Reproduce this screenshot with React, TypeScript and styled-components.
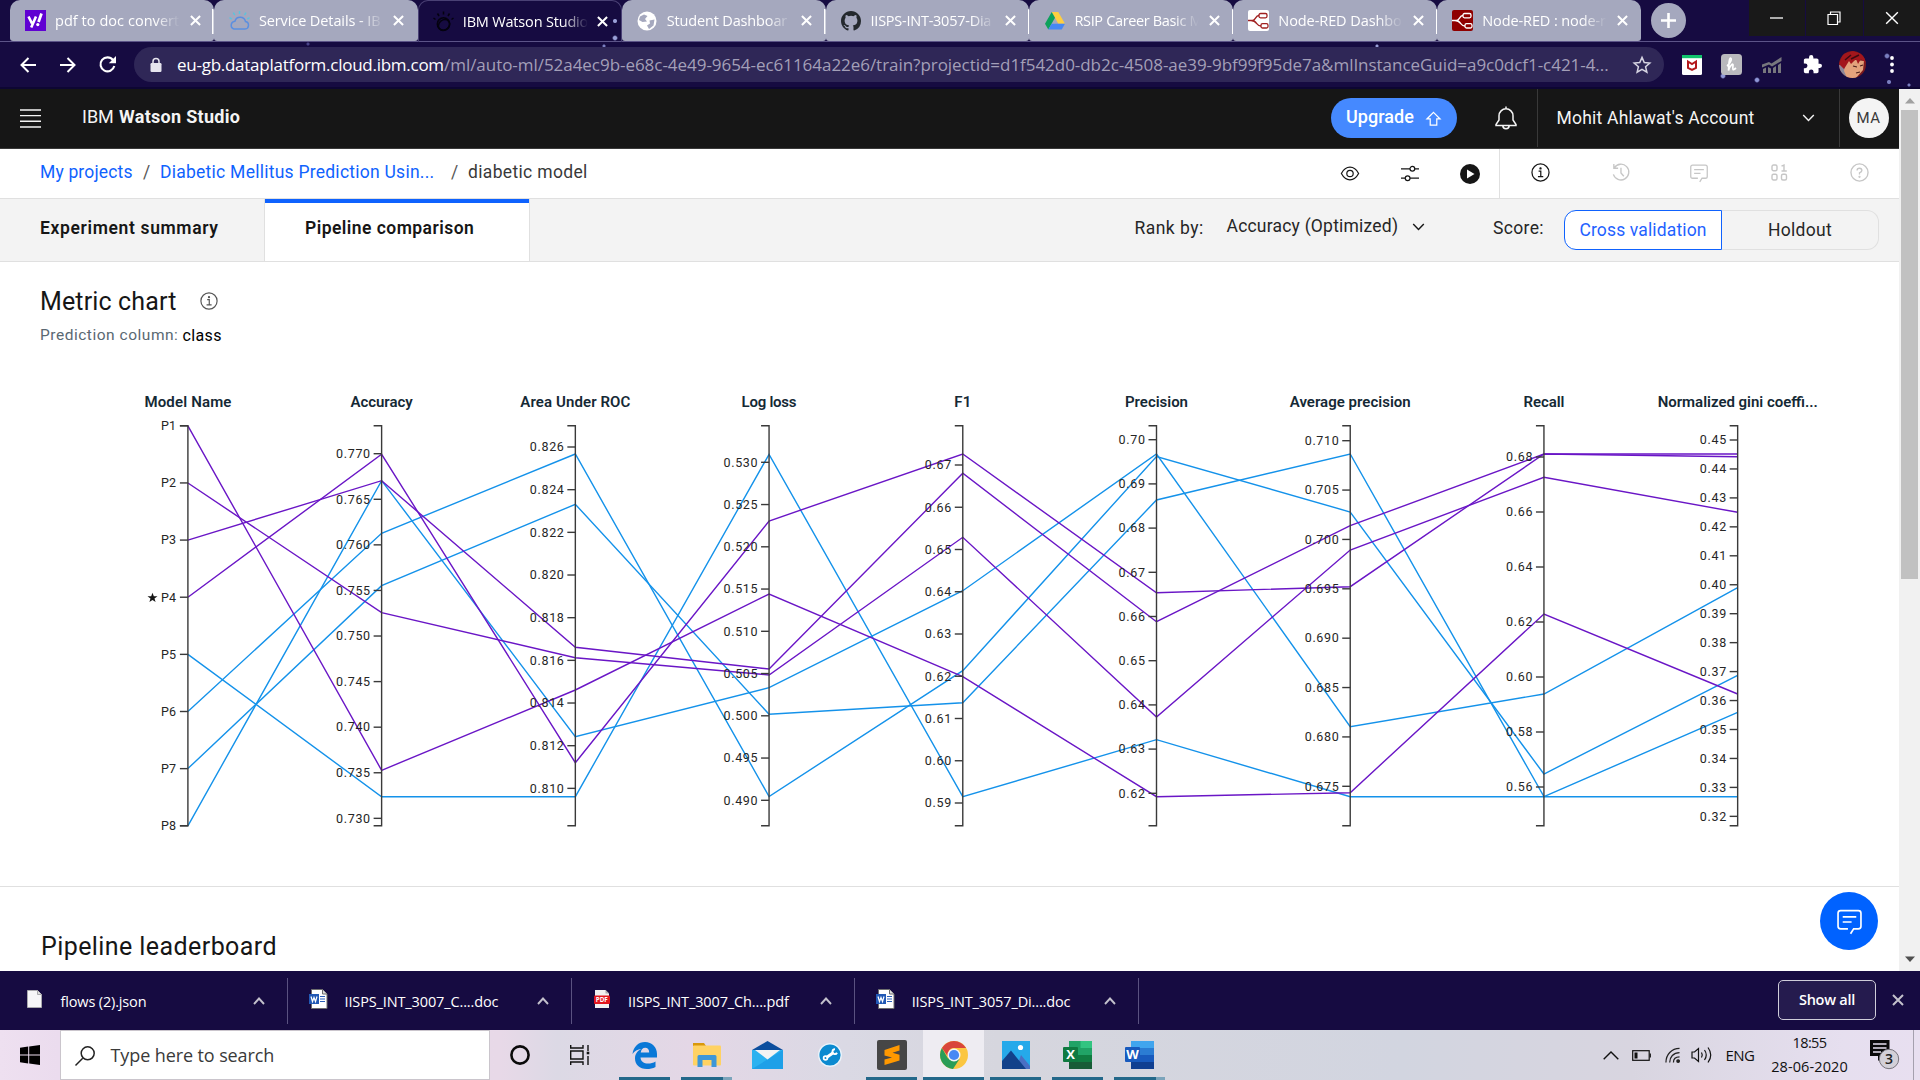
import React from "react";
import styled, { createGlobalStyle, css } from "styled-components";

const UI = '"Open Sans", "Noto Sans", sans-serif';
const PLEX = 'Roboto, "Open Sans", sans-serif';

const Global = createGlobalStyle`
  body { margin: 0; background: #fff; overflow: hidden; }
  * { box-sizing: border-box; }
  svg { display: block; flex: none; overflow: visible; }
`;

const Screen = styled.div`
  width: 1920px; height: 1080px; display: flex; flex-direction: column; overflow: hidden;
  font-family: ${PLEX}; color: #161616;
`;

const Label = styled.span<{ $w?: number; $size?: number; $ls?: number; $weight?: number; $color?: string; $ml?: number; $up?: number }>`
  flex: none; display: block; white-space: pre; line-height: 1.4;
  width: ${p => (p.$w ? p.$w + "px" : "auto")};
  font-size: ${p => p.$size ?? 17.5}px;
  letter-spacing: ${p => p.$ls ?? 0}px;
  font-weight: ${p => p.$weight ?? 400};
  color: ${p => p.$color ?? "inherit"};
  margin-left: ${p => p.$ml ?? 0}px;
  margin-bottom: ${p => p.$up ?? 0}px;
`;
const Slot = styled.span<{ $w: number; $ml?: number; $up?: number }>`
  flex: none; display: flex; justify-content: center; align-items: center;
  width: ${p => p.$w}px; margin-left: ${p => p.$ml ?? 0}px; margin-bottom: ${p => p.$up ?? 0}px;
`;

/* ---------- browser chrome ---------- */
const Chrome = styled.header`
  height: 89px; flex: none; font-family: ${UI}; color: #fff;
  background-color: #160b41;
  background-image:
    radial-gradient(circle at 615px 21px, #9aa0d8 1.5px, transparent 2.5px),
    radial-gradient(circle at 615px 38px, #9aa0d8 1.5px, transparent 3px),
    radial-gradient(circle at 604px 46px, #7a7fc0 1px, transparent 2px),
    radial-gradient(circle at 1723px 76px, #8f97d8 1.5px, transparent 3px),
    radial-gradient(circle at 1757px 80px, #8f97d8 1.5px, transparent 3px),
    radial-gradient(circle at 1887px 56px, #7a7fc0 1.5px, transparent 3px),
    radial-gradient(circle at 1889px 82px, #7a7fc0 1.5px, transparent 2.5px),
    radial-gradient(circle at 1909px 85px, #7a7fc0 1px, transparent 2px),
    radial-gradient(circle at 308px 44px, #4a448a 1px, transparent 2px),
    radial-gradient(circle at 1377px 46px, #9aa0d8 1px, transparent 2px);
  border-bottom: 2px solid #0d0632;
`;
const TabStrip = styled.div`
  height: 42px; display: flex; padding-left: 10px; border-bottom: 1px solid #5c5488;
`;
const TabBox = styled.div<{ $active?: boolean; $divider?: boolean }>`
  width: 203.9px; height: 41px; flex: none; display: flex; align-items: center; padding: 0 0 0 15px;
  border-radius: 10px 10px ${p => (p.$active ? "0 0" : "3px 3px")};
  background: ${p => (p.$active ? "transparent" : "#a5a8be")};
  ${p => p.$active && css`border: 1px solid #4a4175; border-bottom: 0; height: 42px; padding-left: 14px;`}
  ${p => p.$divider && css`
    background-image: linear-gradient(#fff, #fff);
    background-size: 1.5px 25px; background-repeat: no-repeat; background-position: right 9px;`}
`;
const TabTitle = styled.span<{ $ls: number }>`
  width: 125px; margin-left: 9px; font-size: 14.5px; letter-spacing: ${p => p.$ls}px; white-space: pre; overflow: hidden;
  mask-image: linear-gradient(90deg, #000 80%, transparent);
`;
const TabIcon = styled.span`
  width: 21px; height: 24px; flex: none; display: flex; align-items: center; justify-content: center;
`;
const TabClose = styled.span`
  margin-left: 9.5px; display: flex;
`;
const NewTab = styled.div`
  width: 35px; height: 35px; margin: 3px 0 0 10px; border-radius: 50%; background: #a5a8be; flex: none;
  display: flex; align-items: center; justify-content: center;
`;
const WindowButtons = styled.div`
  margin-left: auto; display: flex; gap: 1px; height: 36px;
`;
const WindowButton = styled.div`
  width: 56.5px; background: #191919; display: flex; align-items: center; justify-content: center;
`;
const Toolbar = styled.div`
  height: 45px; display: flex; align-items: center;
`;
const Address = styled.div`
  width: 1530px; height: 35px; margin-left: 18px; border-radius: 18px; background: #2f2757;
  display: flex; align-items: center; padding-left: 16px;
`;

/* ---------- page ---------- */
const Viewport = styled.div`
  height: 882px; flex: none; display: flex;
`;
const Page = styled.main`
  width: 1899px; display: flex; flex-direction: column; background: #fff;
`;
const Masthead = styled.div`
  height: 60px; flex: none; display: flex; align-items: center; background: #161616; color: #f4f4f4;
  border-bottom: 1px solid #393939; padding-bottom: 1px;
`;
const Rule = styled.span<{ $color: string; $ml?: number }>`
  width: 1px; align-self: stretch; flex: none; background: ${p => p.$color}; margin-left: ${p => p.$ml ?? 0}px;
`;
const Upgrade = styled.div`
  width: 126px; height: 40px; margin-left: 1091px; border-radius: 20px; background: #4589ff; color: #fff;
  display: flex; align-items: center; padding-left: 15px; flex: none;
`;
const Avatar = styled.div`
  width: 40px; height: 40px; border-radius: 50%; background: #f4f4f4; color: #393939; margin-left: 9px; flex: none;
  display: flex; align-items: center; justify-content: center; font-size: 15px; letter-spacing: .4px;
`;
const Crumbs = styled.nav`
  height: 50px; flex: none; display: flex; align-items: center; padding-left: 40px; border-bottom: 1px solid #e0e0e0;
`;
const Tabs = styled.div`
  height: 63px; flex: none; display: flex; align-items: center; background: #f3f3f3; border-bottom: 1px solid #e0e0e0;
`;
const PageTab = styled.div<{ $active?: boolean; $w: number }>`
  width: ${p => p.$w}px; height: 62px; flex: none; padding: 0 0 4px 40px; display: flex; align-items: center;
  ${p => p.$active && css`
    background: #fff; border: solid #e0e0e0; border-width: 0 1px; box-shadow: inset 0 4px #0f62fe;`}
`;
const Segmented = styled.div`
  display: flex; height: 40px; margin-left: 20px;
`;
const Segment = styled.div<{ $active?: boolean }>`
  width: ${p => (p.$active ? 158 : 157)}px; display: flex; align-items: center; justify-content: center;
  border: 1px solid ${p => (p.$active ? "#0f62fe" : "#e0e0e0")};
  border-radius: ${p => (p.$active ? "12px 0 0 12px" : "0 12px 12px 0")};
  background: ${p => (p.$active ? "#fff" : "transparent")};
  color: ${p => (p.$active ? "#1f62ff" : "#262626")};
  ${p => !p.$active && css`border-left: 0;`}
`;
const ChartSection = styled.section`
  height: 625px; flex: none; padding: 22px 0 0 40px; border-bottom: 1px solid #e0e0e0;
`;
const HeadingRow = styled.div`
  display: flex; align-items: center; height: 35px;
`;
const SubRow = styled.div`
  display: flex; align-items: center; height: 34px;
`;
const ChartBox = styled.div`
  margin: 30px 0 0 60px; height: 470px;
`;
const Leaderboard = styled.section`
  flex: 1; padding: 42px 0 0 41px; display: flex; justify-content: space-between;
`;
const ChatButton = styled.div`
  width: 58px; height: 58px; border-radius: 50%; background: #0062ff; margin: -37px 21px 0 0;
  display: flex; align-items: center; justify-content: center;
`;
const ScrollTrack = styled.div`
  width: 21px; background: #f1f1f1; display: flex; flex-direction: column; align-items: center; padding: 8px 0;
`;
const ScrollThumb = styled.div`
  width: 17px; height: 469px; background: #c1c1c1; margin: 6px 0 auto;
`;

/* ---------- downloads + taskbar ---------- */
const Downloads = styled.div`
  height: 59px; flex: none; background: #160b41; display: flex; align-items: center; color: #fff; font-family: ${UI};
`;
const Download = styled.div`
  width: 283.6px; height: 46px; display: flex; align-items: center; border-right: 1.5px solid #5a5280; flex: none;
  &:first-child { width: 288px; padding-left: 4px; }
`;
const ShowAll = styled.div`
  width: 98px; height: 40px; margin: 0 0 1px auto; border: 1px solid #cfcdd9; border-radius: 5px; background: #251b4e;
  display: flex; align-items: center; justify-content: center;
`;
const Taskbar = styled.footer`
  height: 50px; flex: none; display: flex; align-items: stretch; font-family: ${UI}; color: #111;
  background: linear-gradient(90deg, #eee0f0 0, #ebdcee 3%, #e8d9e8 26%, #dcd9e5 29%, #e4d7e6 36%, #dad9e4 44%, #d6d6de 52%, #d2d5e0 73%, #d8d5e0 85%, #e6dfef 96%, #e8dff0 100%);
`;
const StartCell = styled.div`
  width: 60px; display: flex; align-items: center; justify-content: center;
`;
const Search = styled.div`
  width: 430px; background: #fff; border: 1px solid #cac5cc; display: flex; align-items: center; padding: 1px 0 0 14px;
`;
const TaskItem = styled.div<{ $w: number; $ml: number; $run?: boolean; $active?: boolean; $more?: boolean }>`
  width: ${p => p.$w}px; margin-left: ${p => p.$ml}px; display: flex; align-items: center; justify-content: center; flex: none;
  background: ${p => (p.$active ? "#eeecf2" : "transparent")};
  border-bottom: 3px solid ${p => (p.$run ? "#23688a" : "transparent")};
  ${p => p.$more && css`border-image: linear-gradient(90deg, #23688a 82%, #7ba4bb 82%) 1;`}
  padding-top: 3px;
`;
const Clock = styled.div`
  width: 80px; margin-left: 14px; display: flex; flex-direction: column; align-items: center; justify-content: center; gap: 3px;
`;

const Stroke = ({ w, h, box, d, c = "currentColor", s = 1.5, children }: {
  w: number; h?: number; box: string; d?: string; c?: string; s?: number; children?: React.ReactNode;
}) => (
  <svg width={w} height={h ?? w} viewBox={box} fill="none" stroke={c} strokeWidth={s}>
    {d && <path d={d} />}
    {children}
  </svg>
);

const Cross = ({ size = 11, c = "#fff", s = 2.2 }: { size?: number; c?: string; s?: number }) => (
  <Stroke w={size} box="0 0 12 12" d="M1 1 11 11M11 1 1 11" c={c} s={s} />
);
const ChevronDown = ({ c, w = 12 }: { c: string; w?: number }) => (
  <Stroke w={w} h={8} box="0 0 12 8" d="M.7 1 6 6.6 11.3 1" c={c} s={1.4} />
);
const Info = ({ size, c }: { size: number; c: string }) => (
  <Stroke w={size} box="0 0 20 20" c={c} s={1.3}>
    <circle cx="10" cy="10" r="9" />
    <path d="M8 8.5h2.3V14M7.3 14.3h5.6" />
    <circle cx="10" cy="5.7" r=".6" fill={c} />
  </Stroke>
);
const Chat = ({ w, c, s }: { w: number; c: string; s: number }) => (
  <Stroke w={w} box="0 0 24 24" c={c} s={s} d="M10.5 19H3.5Q1 19 1 16.5V4Q1 1.5 3.5 1.5H20.5Q23 1.5 23 4V16.5Q23 19 20.5 19H16L13 23.8M5.5 7.5H18.5M5.5 12.5H14" />
);

const NodeRed = ({ bg, c }: { bg: string; c: string }) => (
  <svg width="21" height="21" viewBox="0 0 21 21">
    <rect width="21" height="21" rx="2" fill={bg} />
    <g fill="none" stroke={c} strokeWidth="1.3">
      <path d="M0 10.5h4.5C8 10.5 7 5.5 11 5.5M3 10.5C9.500 10.500 8 16 13 16" />
      <rect x="11" y="3.5" width="8" height="4.300" rx="1.500" />
      <rect x="13" y="13.700" width="7" height="4.300" rx="1.500" />
    </g>
  </svg>
);

const icons: Record<string, React.ReactNode> = {
  yahoo: (
    <svg width="21" height="21" viewBox="0 0 21 21">
      <rect width="21" height="21" fill="#6001d2" />
      <path d="M3.5 6.5 7 13.5M11 6.5 6.200 17.500" stroke="#fff" strokeWidth="2.6" />
      <path d="M13.500 12 16.500 3.500" stroke="#fff" strokeWidth="2.8" />
      <circle cx="12.800" cy="14.600" r="1.6" fill="#fff" />
    </svg>
  ),
  cloud: (
    <svg width="21" height="21" viewBox="0 0 21 21" fill="none" strokeWidth="1.5">
      <path d="M5 19h11a3.800 3.800 0 0 0 .5-7.500 5.500 5.500 0 0 0-10.600-.3A4 4 0 0 0 5 19z" stroke="#5b8fe0" />
      <path d="M10.500 4V1M5.800 5.200 4.300 2.700M15.500 5.200 17 2.700M2.800 9 .5 7.700M18.300 9l2.200-1.300" stroke="#5cc3dc" />
    </svg>
  ),
  watson: (
    <svg width="21" height="23" viewBox="0 0 21 23" fill="none" stroke="#04020f" strokeWidth="1.5">
      <circle cx="10.500" cy="14" r="6.200" />
      <ellipse cx="11" cy="15" rx="6" ry="5" transform="rotate(-40 11 15)" />
      <path d="M10.500 4.500V1.500M6 6 4.500 3.500M15 6l1.500-2.500M2.500 9.500.5 8M18.500 9.500l2-1.500" />
    </svg>
  ),
  globe: (
    <svg width="20" height="20" viewBox="0 0 20 20">
      <circle cx="10" cy="10" r="9.500" fill="#fff" />
      <path d="M3 5.500 7 3.500 10.500 5 8 8 10 10.500 5.500 11 2 9zM12.500 9.500l5-1-1 6-4.500 3.500-2-3.500 3-2z" fill="#a5a8be" />
    </svg>
  ),
  github: (
    <svg width="20" height="20" viewBox="0 0 16 16">
      <path fill="#24292e" d="M8 0C3.580 0 0 3.580 0 8c0 3.540 2.290 6.530 5.470 7.590.4.070.55-.17.55-.38 0-.19-.01-.82-.01-1.490-2.010.37-2.530-.49-2.690-.94-.09-.23-.48-.94-.82-1.130-.28-.15-.68-.52-.01-.53.63-.01 1.080.58 1.230.82.72 1.210 1.870.87 2.330.66.07-.52.28-.87.51-1.070-1.780-.2-3.640-.89-3.640-3.950 0-.87.31-1.590.82-2.150-.08-.2-.36-1.020.08-2.120 0 0 .67-.21 2.200.82a7.600 7.600 0 0 1 4 0c1.530-1.040 2.200-.82 2.200-.82.44 1.100.16 1.920.08 2.120.51.56.82 1.270.82 2.150 0 3.070-1.870 3.750-3.650 3.950.29.25.54.73.54 1.480 0 1.070-.01 1.930-.01 2.200 0 .21.15.46.55.38A8 8 0 0 0 16 8c0-4.420-3.580-8-8-8z" />
    </svg>
  ),
  drive: (
    <svg width="20" height="18" viewBox="0 0 20 18">
      <path d="M6.700 0h6.600L20 11.700h-6.700z" fill="#ffcf40" />
      <path d="M6.700 0 10 5.800 3.300 17.500 0 11.700z" fill="#0da15c" />
      <path d="M6.600 11.700H20l-3.300 5.800H3.300z" fill="#4688f4" />
    </svg>
  ),
  nodeWhite: <NodeRed bg="#fff" c="#a02020" />,
  nodeRed: <NodeRed bg="#8f0000" c="#fff" />,
};

const browserTabs = [
  { icon: "yahoo", title: "pdf to doc convert", ls: 0.05, divider: true },
  { icon: "cloud", title: "Service Details - IB", ls: -0.1 },
  { icon: "watson", title: "IBM Watson Studio", ls: -0.18, active: true },
  { icon: "globe", title: "Student Dashboar", ls: -0.15, divider: true },
  { icon: "github", title: "IISPS-INT-3057-Dia", ls: -0.25, divider: true },
  { icon: "drive", title: "RSIP Career Basic M", ls: -0.35, divider: true },
  { icon: "nodeWhite", title: "Node-RED Dashbo", ls: -0.08, divider: true },
  { icon: "nodeRed", title: "Node-RED : node-r", ls: -0.1 },
];

function BrowserChrome() {
  return (
    <Chrome>
      <TabStrip>
        {browserTabs.map(t => (
          <TabBox key={t.title} $active={t.active} $divider={t.divider}>
            <TabIcon>{icons[t.icon]}</TabIcon>
            <TabTitle $ls={t.ls}>{t.title}</TabTitle>
            <TabClose><Cross /></TabClose>
          </TabBox>
        ))}
        <NewTab><Stroke w={15} box="0 0 15 15" d="M7.5 0V15M0 7.5H15" c="#fff" s={2.6} /></NewTab>
        <WindowButtons>
          <WindowButton><Stroke w={13} h={2} box="0 0 13 2" d="M0 1H13" c="#fff" s={1.3} /></WindowButton>
          <WindowButton><Stroke w={14} box="0 0 14 14" d="M1 3.5H10.5V13.5H1zM3.5 3.5V1H13V11H10.5" c="#fff" s={1.2} /></WindowButton>
          <WindowButton><Cross size={14} s={1.2} /></WindowButton>
        </WindowButtons>
      </TabStrip>
      <Toolbar>
        <Slot $w={17} $ml={19}><Stroke w={16} box="0 0 16 16" d="M16 8H1.500M8.500 1 1.500 8 8.500 15" c="#fff" s={2} /></Slot>
        <Slot $w={17} $ml={23}><Stroke w={16} box="0 0 16 16" d="M0 8H14.500M7.500 1 14.500 8 7.500 15" c="#fff" s={2} /></Slot>
        <Slot $w={17} $ml={23}>
          <svg width="17" height="17" viewBox="0 0 17 17">
            <path d="M14 4A7 7 0 1 0 15.300 10" fill="none" stroke="#fff" strokeWidth="2.1" />
            <path d="M17 0V7.200H9.800z" fill="#fff" />
          </svg>
        </Slot>
        <Address>
          <svg width="12" height="14" viewBox="0 0 12 14">
            <rect x=".5" y="5" width="11" height="9" rx="1.2" fill="#e6e4ee" />
            <path d="M3 6V3.500a3 3 0 0 1 6 0V6" fill="none" stroke="#e6e4ee" strokeWidth="1.5" />
          </svg>
          <Label $size={17} $ls={-0.26} $w={267} $ml={15}>eu-gb.dataplatform.cloud.ibm.com</Label>
          <Label $size={17} $ls={-0.04} $w={1164} $color="#a39fb8">/ml/auto-ml/52a4ec9b-e68c-4e49-9654-ec61164a22e6/train?projectid=d1f542d0-db2c-4508-ae39-9bf99f95de7a&mlInstanceGuid=a9c0dcf1-c421-4...</Label>
          <Slot $w={18} $ml={25}><Stroke w={18} box="0 0 20 20" d="M10 1.500 12.500 7.200 18.700 7.800 14 12 15.400 18 10 14.800 4.600 18 6 12 1.300 7.800 7.500 7.200z" c="#d6d4e2" s={1.7} /></Slot>
        </Address>
        <Slot $w={21} $ml={17}>
          <svg width="20" height="20" viewBox="0 0 20 20">
            <rect width="20" height="20" rx="1.5" fill="#fff" /><rect width="20" height="3.2" fill="#10c46c" />
            <path d="M6 6.500 10 9 14 6.500V13L10 15 6 13z" fill="none" stroke="#b3191c" strokeWidth="2" />
          </svg>
        </Slot>
        <Slot $w={21} $ml={19}>
          <svg width="21" height="21" viewBox="0 0 21 21">
            <rect width="21" height="21" rx="3.5" fill="#b9b9bd" />
            <path d="M6 12C9 10 11.500 4.500 9.500 4 7.500 4 8 12 7.500 16.500 9 11 12.500 8.500 12 11.500 11.500 15.500 11.500 17 15 14" fill="none" stroke="#fff" strokeWidth="1.7" />
          </svg>
        </Slot>
        <Slot $w={20} $ml={20}>
          <svg width="20" height="16" viewBox="0 0 20 16">
            <path d="M0 7.500 7 5 9.500 6.500 19.500 0V4L10 9.500 7 7.500 0 10.500zM1 12l3-1.500V16H1zM6 10l3 1.500V16H6zM11 11l3-2v7h-3zM16 8l3-2v10h-3z" fill="#77777d" />
          </svg>
        </Slot>
        <Slot $w={20} $ml={20}>
          <svg width="19" height="19" viewBox="1 1 22 22">
            <path fill="#fff" d="M20.500 11H19V7c0-1.100-.9-2-2-2h-4V3.500a2.500 2.500 0 0 0-5 0V5H4c-1.100 0-2 .9-2 2v3.800h1.500a2.700 2.700 0 0 1 0 5.400H2V20c0 1.100.9 2 2 2h3.800v-1.500a2.700 2.700 0 0 1 5.400 0V22H17c1.100 0 2-.9 2-2v-4h1.500a2.500 2.500 0 0 0 0-5z" />
          </svg>
        </Slot>
        <Slot $w={28} $ml={16}>
          <svg width="27" height="27" viewBox="0 0 27 27">
            <clipPath id="face"><circle cx="13.500" cy="13.500" r="13.500" /></clipPath>
            <g clipPath="url(#face)">
              <rect width="27" height="27" fill="#7c1a1e" />
              <path d="M0 14 6 13 9 27H0z" fill="#8d8798" />
              <path d="M7 10 17 9 25 10 24 19 17 27H8L5 20z" fill="#e3a27c" />
              <path d="M0 13 4 3 14 0 25 4 27 12 22 8 19 13 17 8 12 13 10 10 5 18z" fill="#a3161c" />
              <path d="M6 9 12 4M12 8 20 4" stroke="#3c0a10" strokeWidth="1.5" />
              <path d="M14 15 18 16M21 15 24 14M17 22 21 21" stroke="#4a1e1a" strokeWidth="1.2" />
            </g>
          </svg>
        </Slot>
        <Slot $w={6} $ml={23}>
          <svg width="4" height="17" viewBox="0 0 4 17" fill="#fff"><circle cx="2" cy="2" r="1.9" /><circle cx="2" cy="8.500" r="1.9" /><circle cx="2" cy="15" r="1.9" /></svg>
        </Slot>
      </Toolbar>
    </Chrome>
  );
}

/* ---------- parallel coordinates chart ---------- */
type Axis = { title: string; from: number; step: number; digits: number; count: number; y0: number; dy: number; w: number };
const AXES: Axis[] = [
  { title: "Accuracy", from: 0.77, step: 0.005, digits: 3, count: 9, y0: 453.7, dy: 45.58, w: 62 },
  { title: "Area Under ROC", from: 0.826, step: 0.002, digits: 3, count: 9, y0: 447, dy: 42.67, w: 110 },
  { title: "Log loss", from: 0.53, step: 0.005, digits: 3, count: 9, y0: 462.3, dy: 42.25, w: 55 },
  { title: "F1", from: 0.67, step: 0.01, digits: 2, count: 9, y0: 465, dy: 42.25, w: 17 },
  { title: "Precision", from: 0.7, step: 0.01, digits: 2, count: 9, y0: 439.7, dy: 44.2, w: 63 },
  { title: "Average precision", from: 0.71, step: 0.005, digits: 3, count: 8, y0: 440.7, dy: 49.37, w: 121 },
  { title: "Recall", from: 0.68, step: 0.02, digits: 2, count: 7, y0: 457, dy: 55, w: 41 },
  { title: "Normalized gini coeffi...", from: 0.45, step: 0.01, digits: 2, count: 14, y0: 440, dy: 28.95, w: 160 },
];
const PURPLE = "#6a16c6";
const BLUE = "#1492ea";
const PIPELINES: { color: string; y: number[] }[] = [
  { color: BLUE, y: [654.4, 796.7, 796.7, 454.3, 796.7, 739.7, 796.7, 796.7, 796.7] },
  { color: BLUE, y: [711.5, 533.3, 454, 796.5, 670.7, 456.5, 512, 774, 675.3] },
  { color: BLUE, y: [768.6, 585.7, 504.3, 714.3, 702.7, 500, 454, 796.7, 712.3] },
  { color: BLUE, y: [825.8, 480.7, 736.7, 687.7, 590.7, 454, 726.7, 694, 587.7] },
  { color: PURPLE, y: [425.8, 770.3, 690, 594, 676.7, 796.7, 792.7, 614, 694] },
  { color: PURPLE, y: [483, 612.7, 657.7, 675, 537.3, 717, 550, 477.3, 512.3] },
  { color: PURPLE, y: [540.1, 480.7, 647.3, 669, 473.3, 621.7, 525.7, 454, 456.7] },
  { color: PURPLE, y: [597.2, 454.3, 762.7, 521, 454, 592.7, 586.7, 454, 454] },
];
const TOP = 425.8;
const BOTTOM = 825.8;
const axisX = (i: number) => 187.9 + i * 193.72;
const STAR = "M0-5 1.300-1.500 5-1.500 2 .8 3.100 4.400 0 2.200-3.100 4.400-2 .8-5-1.500-1.300-1.500z";

const TickText = styled.text`
  font: 400 12.5px ${PLEX}; fill: #262626; text-anchor: end;
`;
const AxisTitle = styled.text`
  font: 600 15px ${PLEX}; fill: #152935; text-anchor: middle;
`;

function ParallelChart() {
  return (
    <svg width="1759" height="470" viewBox="100 383 1759 470">
      {PIPELINES.map((p, k) => (
        <polyline key={k} fill="none" stroke={p.color} strokeWidth="1.4"
          points={p.y.map((y, i) => `${axisX(i)},${y}`).join(" ")} />
      ))}
      <path d={`M${axisX(0) - 8} ${TOP}H${axisX(0)}V${BOTTOM}H${axisX(0) - 8}`} stroke="#3a3a3a" strokeWidth="1.4" fill="none" />
      <AxisTitle x={axisX(0)} y={407} textLength={87}>Model Name</AxisTitle>
      {[1, 2, 3, 4, 5, 6, 7, 8].map((n, i) => {
        const y = TOP + i * 57.14;
        return (
          <g key={n}>
            <path d={`M${axisX(0) - 8} ${y}h8`} stroke="#3a3a3a" strokeWidth="1.4" />
            <TickText x={176} y={y + 4.3} textLength={15}>P{n}</TickText>
            {n === 4 && <path d={STAR} transform={`translate(152.500 ${y + 0.5})`} fill="#161616" />}
          </g>
        );
      })}
      {AXES.map((a, i) => {
        const x = axisX(i + 1);
        return (
          <g key={a.title}>
            <AxisTitle x={x} y={407} textLength={a.w}>{a.title}</AxisTitle>
            <path d={`M${x - 8} ${TOP}H${x}V${BOTTOM}H${x - 8}`} fill="none" stroke="#3a3a3a" strokeWidth="1.4" />
            {Array.from({ length: a.count }, (_, t) => {
              const y = a.y0 + t * a.dy;
              return (
                <g key={t}>
                  <path d={`M${x - 8} ${y}h8`} stroke="#3a3a3a" strokeWidth="1.4" />
                  <TickText x={x - 11.5} y={y + 4.3} textLength={a.digits === 3 ? 34 : 26.5}>
                    {(a.from - t * a.step).toFixed(a.digits)}
                  </TickText>
                </g>
              );
            })}
          </g>
        );
      })}
    </svg>
  );
}

function StudioPage() {
  return (
    <Page>
      <Masthead>
        <Slot $w={22} $ml={19}><Stroke w={21} h={19} box="0 0 21 19" d="M0 1H21M0 6.600H21M0 12.300H21M0 18H21" c="#f4f4f4" s={1.4} /></Slot>
        <Label $size={18} $w={37} $ml={41} $up={2}>IBM</Label>
        <Label $size={18} $weight={700} $ls={0.29} $w={121} $up={2}>Watson Studio</Label>
        <Upgrade>
          <Label $size={18} $weight={500} $ls={0.05} $w={68} $up={2}>Upgrade</Label>
          <Slot $w={16} $ml={11}><Stroke w={15} box="0 0 16 16" d="M8 1.500 15 8.500H11.500V15H4.500V8.500H1z" s={1.3} /></Slot>
        </Upgrade>
        <Slot $w={24} $ml={37}>
          <Stroke w={24} box="0 0 24 24" c="#f4f4f4" s={1.5}>
            <path d="M12 2.800a7 7 0 0 1 7 7V14l3 4.500V19.500H2V18.500L5 14V9.800a7 7 0 0 1 7-7zM12 2.800V.5M8.800 19.500a3.200 3.200 0 0 0 6.400 0" />
          </Stroke>
        </Slot>
        <Rule $color="#393939" $ml={19} />
        <Label $w={198} $ls={0.22} $ml={18.5}>Mohit Ahlawat's Account</Label>
        <Slot $w={14} $ml={47}><ChevronDown c="#f4f4f4" w={13} /></Slot>
        <Rule $color="#393939" $ml={23} />
        <Avatar>MA</Avatar>
      </Masthead>

      <Crumbs>
        <Label $w={92} $ls={0.16} $color="#0f62fe" $up={2}>My projects</Label>
        <Label $w={8} $ml={11} $color="#565656" $up={2}>/</Label>
        <Label $w={274} $ls={0.25} $ml={9} $color="#0f62fe" $up={2}>Diabetic Mellitus Prediction Usin...</Label>
        <Label $w={8} $ml={17} $color="#565656" $up={2}>/</Label>
        <Label $w={119} $ls={0.33} $ml={9} $color="#393939" $up={2}>diabetic model</Label>
        <Slot $w={22} $ml={752}>
          <Stroke w={20} h={15} box="0 0 20 16" c="#161616" s={1.3}>
            <path d="M.8 8C3.500 3 6.500 1.300 10 1.300S16.500 3 19.200 8C16.500 13 13.500 14.700 10 14.700S3.500 13 .8 8z" /><circle cx="10" cy="8" r="3.4" />
          </Stroke>
        </Slot>
        <Slot $w={20} $ml={38.5}>
          <Stroke w={18} h={17} box="0 0 19 17" c="#161616" s={1.3}>
            <path d="M0 3.500H9.500M14.500 3.500H19M0 13.500H4.500M9.500 13.500H19" /><circle cx="12" cy="3.500" r="2.5" /><circle cx="7" cy="13.500" r="2.5" />
          </Stroke>
        </Slot>
        <Slot $w={20} $ml={40.5}>
          <svg width="20" height="20" viewBox="0 0 20 20"><circle cx="10" cy="10" r="10" fill="#161616" /><path d="M7 5.500 14.500 10 7 14.500z" fill="#fff" /></svg>
        </Slot>
        <Rule $color="#e0e0e0" $ml={19} />
        <Slot $w={20} $ml={30} $up={2}><Info size={19} c="#161616" /></Slot>
        <Slot $w={20} $ml={60} $up={2}>
          <Stroke w={19} box="0 0 20 20" c="#c6c6c6" s={1.4} d="M2.500 12A8.300 8.300 0 1 0 3.500 5M3 1V5.500H7.500M10.500 5V10.500L13.500 14" />
        </Slot>
        <Slot $w={20} $ml={59} $up={1}><Chat w={18} c="#c6c6c6" s={1.7} /></Slot>
        <Slot $w={20} $ml={60} $up={2}>
          <Stroke w={17} box="0 0 17 17" c="#c6c6c6" s={1.4}>
            <rect x="1" y="1" width="5" height="5.8" rx="1.5" /><path d="M10.500 2.200 13 1V7M10.500 7H15.800" />
            <rect x="1" y="10.200" width="5" height="5.8" rx="1.5" /><rect x="10.500" y="10.200" width="5" height="5.8" rx="1.5" />
          </Stroke>
        </Slot>
        <Slot $w={20} $ml={60} $up={2}>
          <Stroke w={19} box="0 0 20 20" c="#c6c6c6" s={1.4}>
            <circle cx="10" cy="10" r="9" /><path d="M7.500 8V7.500Q7.500 5.500 10 5.500T12.500 8Q12.500 9.500 10 10.300V12" /><circle cx="10" cy="14.500" r=".5" />
          </Stroke>
        </Slot>
      </Crumbs>

      <Tabs>
        <PageTab $w={264}><Label $weight={600} $ls={0.64}>Experiment summary</Label></PageTab>
        <PageTab $w={266} $active><Label $weight={600} $ls={0.45}>Pipeline comparison</Label></PageTab>
        <Label $w={69} $ls={0.46} $ml={604.5} $up={4} $color="#262626">Rank by:</Label>
        <Label $w={172} $ls={0.21} $ml={23} $up={8} $color="#262626">Accuracy (Optimized)</Label>
        <Slot $w={13} $ml={13} $up={6}><ChevronDown c="#161616" w={13} /></Slot>
        <Label $w={51} $ls={0.34} $ml={68.5} $up={4} $color="#262626">Score:</Label>
        <Segmented>
          <Segment $active><Label $ls={0.14}>Cross validation</Label></Segment>
          <Segment><Label $ls={0.26}>Holdout</Label></Segment>
        </Segmented>
      </Tabs>

      <ChartSection>
        <HeadingRow>
          <Label $size={25} $ls={0.14} $w={137}>Metric chart</Label>
          <Slot $w={18} $ml={23} $up={2}><Info size={18} c="#565656" /></Slot>
        </HeadingRow>
        <SubRow>
          <Label $size={15.5} $ls={0.52} $w={142.5} $color="#5a6872">Prediction column:</Label>
          <Label $size={16} $ls={0.35} $color="#000">class</Label>
        </SubRow>
        <ChartBox><ParallelChart /></ChartBox>
      </ChartSection>

      <Leaderboard>
        <Label $size={25} $ls={0.42}>Pipeline leaderboard</Label>
        <ChatButton><Chat w={25} c="#fff" s={1.6} /></ChatButton>
      </Leaderboard>
    </Page>
  );
}

/* ---------- download shelf ---------- */
const WordDoc = () => (
  <svg width="19" height="20" viewBox="0 0 19 20">
    <path d="M2.500.5H13.500L18 5V19.500H2.500z" fill="#fff" stroke="#6d6d6d" /><path d="M13.500.5V5H18" fill="#ddd" stroke="#6d6d6d" />
    <path d="M11 7.500h5M11 10h5M11 12.500h5" stroke="#2b5fb8" />
    <rect y="5" width="10" height="10" fill="#2259b5" />
    <path d="M2 7.500 3.500 12.500 5 8.500 6.500 12.500 8 7.500" fill="none" stroke="#fff" strokeWidth="1.2" />
  </svg>
);
const PdfText = styled.text`font: 700 6.3px ${UI}; fill: #fff;`;
const PdfDoc = () => (
  <svg width="16" height="18" viewBox="0 0 16 18">
    <path d="M1 0H11.500L15 3.500V18H1z" fill="#f2f2f2" /><path d="M11.500 0V3.500H15z" fill="#aaa" />
    <rect y="5.500" width="16" height="8.500" rx="1" fill="#e2171e" />
    <PdfText x="1.700" y="12.100">PDF</PdfText>
  </svg>
);
const PlainDoc = () => (
  <svg width="15" height="18" viewBox="0 0 15 18">
    <path d="M.5.500H10.500L14.500 4.500V17.500H.5z" fill="#f6f6f8" stroke="#a9a9ad" /><path d="M10.500.5V4.500H14.500" fill="#ddd" stroke="#a9a9ad" />
  </svg>
);
const ShelfText = styled.span<{ $ls: number }>`
  width: 192px; margin: 2px 0 0 15.5px; font-size: 14.5px; letter-spacing: ${p => p.$ls}px; white-space: pre; flex: none;
`;
const ShelfArrow = () => (
  <Stroke w={12} h={8} box="0 0 12 8" d="M1 7 6 1.500 11 7" c="#c3c1cc" s={1.9} />
);
const files = [
  { icon: <PlainDoc />, name: "flows (2).json", ls: -0.15 },
  { icon: <WordDoc />, name: "IISPS_INT_3007_C....doc", ls: -0.13 },
  { icon: <PdfDoc />, name: "IISPS_INT_3007_Ch....pdf", ls: -0.13 },
  { icon: <WordDoc />, name: "IISPS_INT_3057_Di....doc", ls: -0.13 },
];

function DownloadShelf() {
  return (
    <Downloads>
      {files.map(f => (
        <Download key={f.name}>
          <Slot $w={22} $ml={19} $up={3}>{f.icon}</Slot>
          <ShelfText $ls={f.ls}>{f.name}</ShelfText>
          <ShelfArrow />
        </Download>
      ))}
      <ShowAll><Label $size={14.5} $weight={600} $ls={-0.25}>Show all</Label></ShowAll>
      <Slot $w={12} $ml={15.5} $up={1}><Cross size={12} c="#c3c1cc" s={2} /></Slot>
      <Slot $w={16.5}>{null}</Slot>
    </Downloads>
  );
}

/* ---------- taskbar ---------- */
const Letter = styled.text`font: 700 13px ${UI}; fill: #fff; text-anchor: middle;`;
const OfficeIcon = ({ letter, tones }: { letter: string; tones: string[] }) => (
  <svg width="29" height="28" viewBox="0 0 29 28">
    <rect x="6" width="23" height="28" rx="1.5" fill={tones[2]} />
    <path d="M6 0H29V7H6z" fill={tones[0]} /><path d="M6 7H29V14H6z" fill={tones[1]} />
    <path d="M6 14H29V21H6z" fill={tones[2]} /><path d="M6 21H29V28H6z" fill={tones[3]} />
    {letter === "X" && <path d="M6 0H17.500V14H6z" fill="#21a366" />}
    <rect y="6" width="15" height="15" rx="1" fill={tones[4]} />
    <Letter x="7.500" y="18.200">{letter}</Letter>
  </svg>
);
const BadgeText = styled.text`font: 600 14px ${UI}; fill: #222; text-anchor: middle;`;

function WindowsTaskbar() {
  return (
    <Taskbar>
      <StartCell>
        <svg width="20" height="20" viewBox="0 0 20 20"><path d="M0 2.800 8.200 1.600V9.500H0zM9.200 1.500 20 0V9.500H9.200zM0 10.500H8.200V18.400L0 17.200zM9.200 10.500H20V20L9.200 18.500z" /></svg>
      </StartCell>
      <Search>
        <Stroke w={20} box="0 0 20 20" c="#222" s={1.5} d="M7.700 12.300.5 19.500"><circle cx="12.700" cy="7.300" r="6.5" /></Stroke>
        <Label $size={18} $ls={-0.1} $ml={15.5} $color="#3a3a3a">Type here to search</Label>
      </Search>
      <TaskItem $w={20} $ml={20}><Stroke w={20} box="0 0 20 20" c="#0a0a0a" s={2.6}><circle cx="10" cy="10" r="8.6" /></Stroke></TaskItem>
      <TaskItem $w={20} $ml={40}>
        <Stroke w={20} box="0 0 20 20" c="#111" s={1.4} d="M.7 0V3H13V0M.7 20V17H13V20M.7 6H13V14H.7zM18 0V6M18 11V20"><rect x="16.700" y="6.700" width="2.6" height="2.6" fill="#111" stroke="none" /></Stroke>
      </TaskItem>
      <TaskItem $w={51} $ml={29} $run>
        <svg width="25" height="27" viewBox="0 0 25 27">
          <path fill="#0a78d7" d="M.5 12C1.500 4.500 6.500 0 13 0c7 0 12 5 12 12v3.500H8.500c.3 4 3.500 6 7.500 6 2.800 0 5.300-.8 7.500-2.100v5.600c-2.600 1.400-5.600 2-8.700 2C7.500 27 3 22.500 3 16.500 3 12 5.500 8.800 9.500 7 5.500 7.500 2.500 9 .5 12zm8.200-1.500h8.500c0-3-1.500-4.800-4-4.800-2.400 0-4 1.800-4.500 4.800z" />
        </svg>
      </TaskItem>
      <TaskItem $w={51} $ml={11} $run $more>
        <svg width="28" height="24" viewBox="0 0 28 24">
          <path d="M0 0H11L13 3H0z" fill="#d9980a" /><rect y="2.500" width="28" height="20" rx="1" fill="#ffd263" />
          <path d="M4.500 24V13.500Q4.500 12 6 12H22Q23.500 12 23.500 13.500V24H18.500V17H9.500V24z" fill="#3e97d8" />
        </svg>
      </TaskItem>
      <TaskItem $w={31} $ml={20}>
        <svg width="31" height="28" viewBox="0 0 31 28">
          <path d="M0 9 15.500 0 31 9V12H0z" fill="#0d4f9e" />
          <path d="M0 9V28H31V9z" fill="#2bb2f0" /><path d="M0 28 31 9V28z" fill="#1ea0e8" />
          <path d="M3 9H28L15.500 18.500z" fill="#f3f3f3" />
        </svg>
      </TaskItem>
      <TaskItem $w={24} $ml={35}>
        <svg width="24" height="24" viewBox="0 0 24 24">
          <circle cx="12" cy="12" r="11.300" fill="#0b8ad0" stroke="#eaf3fa" strokeWidth="1.4" />
          <path d="M8.500 14.500 15.500 9.500" stroke="#fff" strokeWidth="2.8" /><circle cx="7.500" cy="15" r="1.9" fill="none" stroke="#fff" strokeWidth="1.7" />
          <path d="M17 6.300a2.400 2.400 0 1 0 2 3.500" fill="none" stroke="#fff" strokeWidth="1.9" />
        </svg>
      </TaskItem>
      <TaskItem $w={51} $ml={24} $run>
        <svg width="30" height="30" viewBox="0 0 30 30">
          <rect width="30" height="30" rx="2" fill="#464646" />
          <path d="M22.500 5 7.500 10V15.500L15 17.500 7.500 19.500V25L22.500 20.500V14.800L15.500 12.800 22.500 10.500z" fill="#ff9800" />
        </svg>
      </TaskItem>
      <TaskItem $w={61} $ml={6} $run $active>
        <svg width="28" height="28" viewBox="0 0 28 28">
          <circle cx="14" cy="14" r="14" fill="#fbc641" />
          <path d="M1.900 7A14 14 0 0 0 13 28L19.500 18 8 17.500z" fill="#2a9d57" />
          <path d="M1.900 7A14 14 0 0 1 26.100 7H14C10 7 8 9.500 7.600 15z" fill="#d9453b" />
          <circle cx="14" cy="14" r="6.5" fill="#f4f4f4" /><circle cx="14" cy="14" r="5.1" fill="#4688f4" />
        </svg>
      </TaskItem>
      <TaskItem $w={51} $ml={6} $run>
        <svg width="28" height="28" viewBox="0 0 28 28">
          <rect width="28" height="28" fill="#25a9ea" /><path d="M14 28 19 14 28 25V28z" fill="#4a6fc4" />
          <path d="M0 20 9 9.500 24 28H0z" fill="#12418a" /><circle cx="18.500" cy="6.500" r="2.6" fill="#fff" />
        </svg>
      </TaskItem>
      <TaskItem $w={51} $ml={11} $run><OfficeIcon letter="X" tones={["#33c481", "#21a366", "#107c41", "#185c37", "#0f7a40"]} /></TaskItem>
      <TaskItem $w={51} $ml={11} $run $more><OfficeIcon letter="W" tones={["#41a5ee", "#2b7cd3", "#185abd", "#103f91", "#185abd"]} /></TaskItem>

      <TaskItem $w={17} $ml={437.5}><Stroke w={16} h={9} box="0 0 16 9" d="M.7 8.300 8 1 15.300 8.300" c="#111" s={1.4} /></TaskItem>
      <TaskItem $w={20} $ml={12}>
        <Stroke w={19} h={11} box="0 0 19 11" c="#111" s={1.2}><rect x=".7" y=".7" width="16.5" height="9.6" /><path d="M18.300 3.500V7.500" /><rect x="2.500" y="2.500" width="3" height="6" fill="#111" stroke="none" /></Stroke>
      </TaskItem>
      <TaskItem $w={17} $ml={12}>
        <Stroke w={15} h={16} box="0 0 16 17" c="#222" s={1.3} d="M1 16.500C1 8 7 1.500 15.500 1.500M5 16.500C5 10.500 9 6 15.500 6M9 16.500C9 13 11.500 10.500 15.500 10.500"><circle cx="14" cy="15" r="1.4" fill="#222" /></Stroke>
      </TaskItem>
      <TaskItem $w={23} $ml={10}>
        <Stroke w={22} h={18} box="0 0 22 18" c="#111" s={1.2} d="M1 6H3.500L7.500 2.500V15.500L3.500 12H1zM10.500 6.500Q12 9 10.500 11.500M13.500 4Q17 9 13.500 14M17 1.500Q22.500 9 17 16.500" />
      </TaskItem>
      <TaskItem $w={31} $ml={11}><Label $size={15} $ls={-0.5}>ENG</Label></TaskItem>
      <Clock>
        <Label $size={14.5} $ls={-0.6}>18:55</Label>
        <Label $size={14.5} $ls={0.1}>28-06-2020</Label>
      </Clock>
      <TaskItem $w={32} $ml={19.5}>
        <svg width="32" height="30" viewBox="0 1 32 30">
          <path d="M1 1H20.500V17H14L9 22V17H1z" fill="#0a0a0a" /><path d="M4 5H17.500M4 9H17.500M4 13H12" stroke="#e6dfef" strokeWidth="1.4" />
          <circle cx="20" cy="20" r="9.700" fill="#d3d0d8" stroke="#77747c" strokeWidth="1" /><BadgeText x="20" y="25">3</BadgeText>
        </svg>
      </TaskItem>
      <Rule $color="#a5a0ae" $ml={12} />
    </Taskbar>
  );
}

export default function App() {
  return (
    <Screen>
      <Global />
      <BrowserChrome />
      <Viewport>
        <StudioPage />
        <ScrollTrack>
          <svg width="10" height="7" viewBox="0 0 10 7"><path d="M0 6.500 5 1 10 6.500z" fill="#a0a0a0" /></svg>
          <ScrollThumb />
          <svg width="10" height="7" viewBox="0 0 10 7"><path d="M0 .5 5 6 10 .5z" fill="#505050" /></svg>
        </ScrollTrack>
      </Viewport>
      <DownloadShelf />
      <WindowsTaskbar />
    </Screen>
  );
}
